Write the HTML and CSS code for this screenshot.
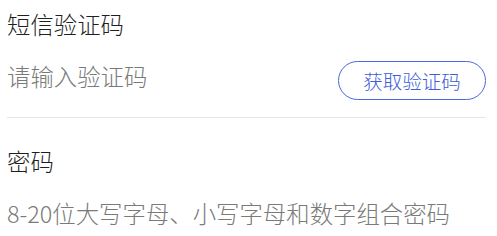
FILE: index.html
```html
<html>
  <head>
    <title>短信验证</title>
    <meta name="viewport" content="width=device-width, initial-scale=1.0" />
    <link rel="stylesheet" href="styles.css">
  </head>
  <body>
    <div class="form">
      <div class="campo">
        <div class="etiqueta">短信验证码</div>
        <div class="fila">
          <input class="entrada" type="text" placeholder="请输入验证码">
          <button class="boton">获取验证码</button>
        </div>
      </div>
      <div class="campo">
        <div class="etiqueta">密码</div>
        <div class="fila">
          <input class="entrada" type="password" placeholder="8-20位大写字母、小写字母和数字组合密码">
        </div>
      </div>
    </div>
  </body>
</html>
```

FILE: styles.css
```css
body {
  margin: 0;
  background-color: white;
  font-family: "Noto Sans CJK SC", "Noto Sans", sans-serif;
}
.form {
  padding: 0 11px 0 7px;
}
.campo {
  border-bottom: 1px solid #e6e6e6;
  padding-top: 9px;
  padding-bottom: 17px;
}
.campo:last-child {
  border-bottom: none;
  padding-top: 28px;
  padding-bottom: 0;
}
.etiqueta {
  font-size: 23.4px;
  font-weight: 300;
  line-height: 30px;
  color: #1f1f1f;
}
.fila {
  display: flex;
  align-items: center;
  justify-content: space-between;
  height: 40px;
  margin-top: 21px;
}
.campo:last-child .fila {
  margin-top: 17px;
}
.entrada {
  flex: 1;
  min-width: 0;
  border: none;
  outline: none;
  padding: 0;
  font-family: inherit;
  font-size: 23.4px;
  font-weight: 300;
  color: #1f1f1f;
  background: transparent;
}
.campo:first-child .entrada {
  margin-bottom: 9px;
}
.entrada::placeholder {
  color: #7a7a7a;
}
.boton {
  width: 148px;
  height: 39px;
  border: 1px solid #4a68dc;
  border-radius: 20px;
  background-color: white;
  color: #3d5dd8;
  font-family: inherit;
  font-size: 19.5px;
  font-weight: 300;
  padding: 0;
}
```
